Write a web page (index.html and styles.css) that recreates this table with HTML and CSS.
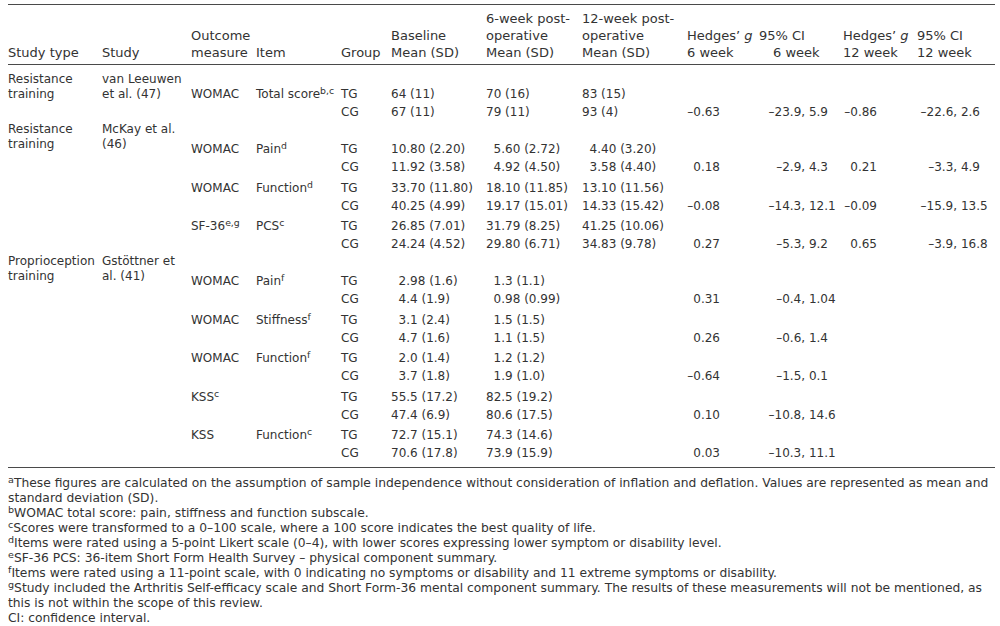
FILE: index.html
```html
<!DOCTYPE html>
<html lang="en">
<head>
<meta charset="utf-8">
<title>Table</title>
<link rel="stylesheet" href="styles.css">
</head>
<body>
<div class="page">
<table class="data">
  <colgroup>
    <col class="c1"><col class="c2"><col class="c3"><col class="c4"><col class="c5"><col class="c6">
    <col class="c7"><col class="c8"><col class="c9"><col class="c10"><col class="c11"><col class="c12">
  </colgroup>
  <thead>
    <tr>
      <th>Study type</th>
      <th>Study</th>
      <th>Outcome<br>measure</th>
      <th>Item</th>
      <th>Group</th>
      <th>Baseline<br>Mean (SD)</th>
      <th>6-week post-<br>operative<br>Mean (SD)</th>
      <th>12-week post-<br>operative<br>Mean (SD)</th>
      <th>Hedges’ <i>g</i><br>6 week</th>
      <th>95% CI<br><span class="indent">6 week</span></th>
      <th>Hedges’ <i>g</i><br>12 week</th>
      <th>95% CI<br>12 week</th>
    </tr>
  </thead>
  <tbody class="block b1">
    <tr class="tg first">
      <td rowspan="2" class="st">Resistance training</td>
      <td rowspan="2" class="st">van Leeuwen et al. (47)</td>
      <td>WOMAC</td><td>Total score<sup>b,c</sup></td><td>TG</td>
      <td>64 (11)</td><td>70 (16)</td><td>83 (15)</td>
      <td class="hg6"></td><td class="ci"></td><td class="hg12"></td><td class="ci"></td>
    </tr>
    <tr class="cg">
      <td></td><td></td><td>CG</td>
      <td>67 (11)</td><td>79 (11)</td><td>93 (4)</td>
      <td class="hg6">–0.63</td><td class="ci">–23.9, 5.9</td><td class="hg12">–0.86</td><td class="ci">–22.6, 2.6</td>
    </tr>
  </tbody>
  <tbody class="block">
    <tr class="tg first">
      <td rowspan="6" class="st">Resistance training</td>
      <td rowspan="6" class="st">McKay et al. (46)</td>
      <td>WOMAC</td><td>Pain<sup>d</sup></td><td>TG</td>
      <td>10.80 (2.20)</td><td class="i1">5.60 (2.72)</td><td class="i1">4.40 (3.20)</td>
      <td class="hg6"></td><td class="ci"></td><td class="hg12"></td><td class="ci"></td>
    </tr>
    <tr class="cg">
      <td></td><td></td><td>CG</td>
      <td>11.92 (3.58)</td><td class="i1">4.92 (4.50)</td><td class="i1">3.58 (4.40)</td>
      <td class="hg6">0.18</td><td class="ci">–2.9, 4.3</td><td class="hg12">0.21</td><td class="ci">–3.3, 4.9</td>
    </tr>
    <tr class="tg">
      <td>WOMAC</td><td>Function<sup>d</sup></td><td>TG</td>
      <td>33.70 (11.80)</td><td>18.10 (11.85)</td><td>13.10 (11.56)</td>
      <td class="hg6"></td><td class="ci"></td><td class="hg12"></td><td class="ci"></td>
    </tr>
    <tr class="cg">
      <td></td><td></td><td>CG</td>
      <td>40.25 (4.99)</td><td>19.17 (15.01)</td><td>14.33 (15.42)</td>
      <td class="hg6">–0.08</td><td class="ci wide">–14.3, 12.1</td><td class="hg12">–0.09</td><td class="ci wide">–15.9, 13.5</td>
    </tr>
    <tr class="tg">
      <td>SF-36<sup>e,g</sup></td><td>PCS<sup>c</sup></td><td>TG</td>
      <td>26.85 (7.01)</td><td>31.79 (8.25)</td><td>41.25 (10.06)</td>
      <td class="hg6"></td><td class="ci"></td><td class="hg12"></td><td class="ci"></td>
    </tr>
    <tr class="cg">
      <td></td><td></td><td>CG</td>
      <td>24.24 (4.52)</td><td>29.80 (6.71)</td><td>34.83 (9.78)</td>
      <td class="hg6">0.27</td><td class="ci">–5.3, 9.2</td><td class="hg12">0.65</td><td class="ci wide">–3.9, 16.8</td>
    </tr>
  </tbody>
  <tbody class="block last">
    <tr class="tg first">
      <td rowspan="10" class="st">Proprioception training</td>
      <td rowspan="10" class="st">Gstöttner et al. (41)</td>
      <td>WOMAC</td><td>Pain<sup>f</sup></td><td>TG</td>
      <td class="i1">2.98 (1.6)</td><td class="i1">1.3 (1.1)</td><td></td>
      <td class="hg6"></td><td class="ci"></td><td class="hg12"></td><td class="ci"></td>
    </tr>
    <tr class="cg">
      <td></td><td></td><td>CG</td>
      <td class="i1">4.4 (1.9)</td><td class="i1">0.98 (0.99)</td><td></td>
      <td class="hg6">0.31</td><td class="ci wide">–0.4, 1.04</td><td class="hg12"></td><td class="ci"></td>
    </tr>
    <tr class="tg">
      <td>WOMAC</td><td>Stiffness<sup>f</sup></td><td>TG</td>
      <td class="i1">3.1 (2.4)</td><td class="i1">1.5 (1.5)</td><td></td>
      <td class="hg6"></td><td class="ci"></td><td class="hg12"></td><td class="ci"></td>
    </tr>
    <tr class="cg">
      <td></td><td></td><td>CG</td>
      <td class="i1">4.7 (1.6)</td><td class="i1">1.1 (1.5)</td><td></td>
      <td class="hg6">0.26</td><td class="ci">–0.6, 1.4</td><td class="hg12"></td><td class="ci"></td>
    </tr>
    <tr class="tg">
      <td>WOMAC</td><td>Function<sup>f</sup></td><td>TG</td>
      <td class="i1">2.0 (1.4)</td><td class="i1">1.2 (1.2)</td><td></td>
      <td class="hg6"></td><td class="ci"></td><td class="hg12"></td><td class="ci"></td>
    </tr>
    <tr class="cg">
      <td></td><td></td><td>CG</td>
      <td class="i1">3.7 (1.8)</td><td class="i1">1.9 (1.0)</td><td></td>
      <td class="hg6">–0.64</td><td class="ci">–1.5, 0.1</td><td class="hg12"></td><td class="ci"></td>
    </tr>
    <tr class="tg">
      <td>KSS<sup>c</sup></td><td></td><td>TG</td>
      <td>55.5 (17.2)</td><td>82.5 (19.2)</td><td></td>
      <td class="hg6"></td><td class="ci"></td><td class="hg12"></td><td class="ci"></td>
    </tr>
    <tr class="cg">
      <td></td><td></td><td>CG</td>
      <td>47.4 (6.9)</td><td>80.6 (17.5)</td><td></td>
      <td class="hg6">0.10</td><td class="ci wide">–10.8, 14.6</td><td class="hg12"></td><td class="ci"></td>
    </tr>
    <tr class="tg">
      <td>KSS</td><td>Function<sup>c</sup></td><td>TG</td>
      <td>72.7 (15.1)</td><td>74.3 (14.6)</td><td></td>
      <td class="hg6"></td><td class="ci"></td><td class="hg12"></td><td class="ci"></td>
    </tr>
    <tr class="cg end">
      <td></td><td></td><td>CG</td>
      <td>70.6 (17.8)</td><td>73.9 (15.9)</td><td></td>
      <td class="hg6">0.03</td><td class="ci wide">–10.3, 11.1</td><td class="hg12"></td><td class="ci"></td>
    </tr>
  </tbody>
</table>

<div class="notes">
  <p><sup>a</sup>These figures are calculated on the assumption of sample independence without consideration of inflation and deflation. Values are represented as mean and standard deviation (SD).</p>
  <p><sup>b</sup>WOMAC total score: pain, stiffness and function subscale.</p>
  <p><sup>c</sup>Scores were transformed to a 0–100 scale, where a 100 score indicates the best quality of life.</p>
  <p><sup>d</sup>Items were rated using a 5-point Likert scale (0–4), with lower scores expressing lower symptom or disability level.</p>
  <p><sup>e</sup>SF-36 PCS: 36-item Short Form Health Survey – physical component summary.</p>
  <p><sup>f</sup>Items were rated using a 11-point scale, with 0 indicating no symptoms or disability and 11 extreme symptoms or disability.</p>
  <p><sup>g</sup>Study included the Arthritis Self-efficacy scale and Short Form-36 mental component summary. The results of these measurements will not be mentioned, as this is not within the scope of this review.</p>
  <p>CI: confidence interval.</p>
</div>
</div>
</body>
</html>
```

FILE: styles.css
```css
html, body {
  margin: 0;
  padding: 0;
  background: #ffffff;
}

body {
  font-family: "DejaVu Sans", Verdana, sans-serif;
  font-size: 12px;
  color: #333333;
}

.page {
  padding: 4px 5px 0 8px;
}

.data {
  border-collapse: collapse;
  table-layout: fixed;
  width: 987px;
  border-top: 1px solid #4a4a4a;
  border-bottom: 1px solid #4a4a4a;
}

.c1 { width: 94px; }
.c2 { width: 89px; }
.c3 { width: 65px; }
.c4 { width: 85px; }
.c5 { width: 50px; }
.c6 { width: 95px; }
.c7 { width: 96px; }
.c8 { width: 105px; }
.c9 { width: 72px; }
.c10 { width: 84px; }
.c11 { width: 74px; }
.c12 { width: 78px; }

.data th {
  font-weight: normal;
  font-size: 13px;
  text-align: left;
  vertical-align: bottom;
  line-height: 17px;
  padding: 5px 0 3px 0;
  white-space: nowrap;
  border-bottom: 1px solid #4a4a4a;
}

.data th i {
  font-style: italic;
}

.indent {
  padding-left: 14px;
}

.data td {
  line-height: 15px;
  text-align: left;
  vertical-align: top;
  white-space: nowrap;
  padding: 1.5px 0;
}

.data td.st {
  white-space: normal;
  padding-top: 0.5px;
  padding-right: 4px;
}

.data tr.tg td {
  padding-top: 4px;
}

.data tr.first td {
  padding-top: 20.5px;
}

.data tr.first td.st {
  padding-top: 0.5px;
}

.data .b1 tr.first td {
  padding-top: 22px;
}

.data .b1 tr.first td.st {
  padding-top: 7px;
}

.data tr.end td {
  padding-bottom: 6px;
}

.data td.i1 {
  padding-left: 7.6px;
}

.data td.hg6 {
  text-align: right;
  padding-right: 39px;
}

.data td.hg12 {
  text-align: right;
  padding-right: 40px;
}

.data td.ci {
  text-align: right;
  padding-right: 15px;
}

.data td.ci.wide {
  padding-right: 7.4px;
}

sup {
  font-size: 0.78em;
  line-height: 0;
  vertical-align: 4px;
}

.notes {
  margin-top: 8px;
  width: 987px;
  font-size: 12.3px;
}

.notes p {
  margin: 0;
  line-height: 15px;
}
```
